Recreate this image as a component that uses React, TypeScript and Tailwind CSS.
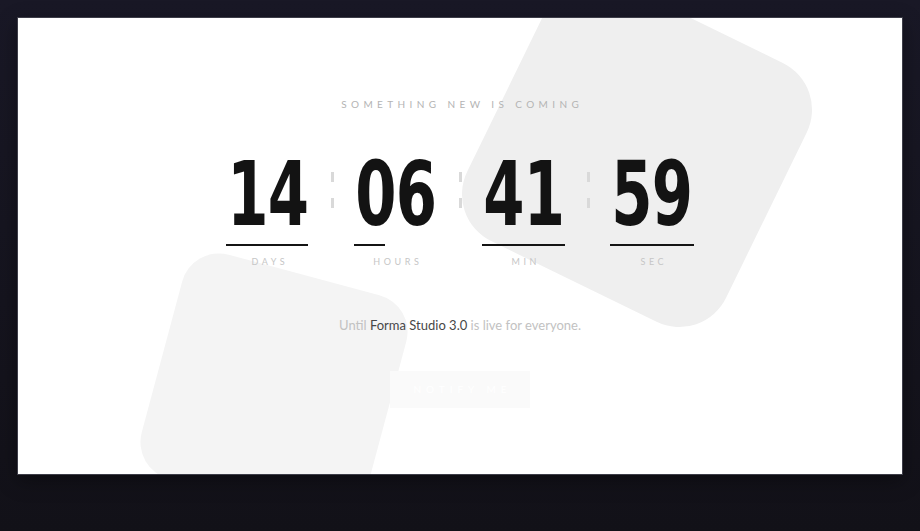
import React from "react";

const units = [
  { value: "14", label: "DAYS", bar: 82 },
  { value: "06", label: "HOURS", bar: 31 },
  { value: "41", label: "MIN", bar: 83 },
  { value: "59", label: "SEC", bar: 84 },
];

function Separator() {
  return (
    <div className="w-[44px] flex flex-col items-center pt-[23px] gap-[16px]">
      <div className="w-[3px] h-[10px] bg-[#d9d9d9]" />
      <div className="w-[3px] h-[10px] bg-[#d9d9d9]" />
    </div>
  );
}

export default function App() {
  return (
    <div
      className="w-full h-[531px] bg-gradient-to-b from-[#191826] to-[#121118] pt-[17px] px-[17px]"
      style={{ fontFamily: "Lato, 'Noto Sans', sans-serif" }}
    >
      <div className="relative w-[886px] h-[458px] bg-white border border-[#3d3d48] overflow-hidden shadow-[0_6px_18px_rgba(0,0,0,0.35)]">
        {/* decorative shapes */}
        <div className="absolute left-[475px] top-[-10px] w-[288px] h-[288px] rounded-[52px] bg-[#efefef] rotate-[26deg]" />
        <div className="absolute left-[140px] top-[253px] w-[232px] h-[232px] rounded-[38px] bg-[#f4f4f4] rotate-[15deg]" />

        <div className="relative z-10 flex flex-col items-center pt-[80px]">
          <div className="text-[10px] leading-[12px] tracking-[0.44em] pl-[0.44em] text-[#b4b4b4]">
            SOMETHING NEW IS COMING
          </div>

          <div className="mt-[39px] flex">
            {units.map((u, i) => (
              <React.Fragment key={u.label}>
                {i > 0 && <Separator />}
                <div className="w-[84px] flex flex-col">
                  <div className="h-[90px] flex justify-center">
                    <span
                      className="inline-block text-[89px] leading-[90px] font-bold text-[#131313] scale-x-[0.74] tracking-[-1px] whitespace-nowrap"
                      style={{ fontFamily: "'DejaVu Sans Condensed', 'DejaVu Sans', sans-serif", fontStretch: "condensed" }}
                    >
                      {u.value}
                    </span>
                  </div>
                  <div className="mt-[5px] h-[2px] bg-[#141414]" style={{ width: u.bar }} />
                  <div className="mt-[10px] text-[9px] leading-[12px] tracking-[0.4em] pl-[0.4em] text-center text-[#c6c6c6]">
                    {u.label}
                  </div>
                </div>
              </React.Fragment>
            ))}
          </div>

          <div className="mt-[48px] text-[13px] leading-[18px] text-[#c2c2c2]">
            Until <span className="text-[#474747]">Forma Studio 3.0</span> is live for everyone.
          </div>

          <button className="mt-[37px] w-[140px] h-[37px] bg-[#fafafa] text-white text-[10px] tracking-[0.5em] pl-[0.5em]">
            NOTIFY ME
          </button>
        </div>
      </div>
    </div>
  );
}
